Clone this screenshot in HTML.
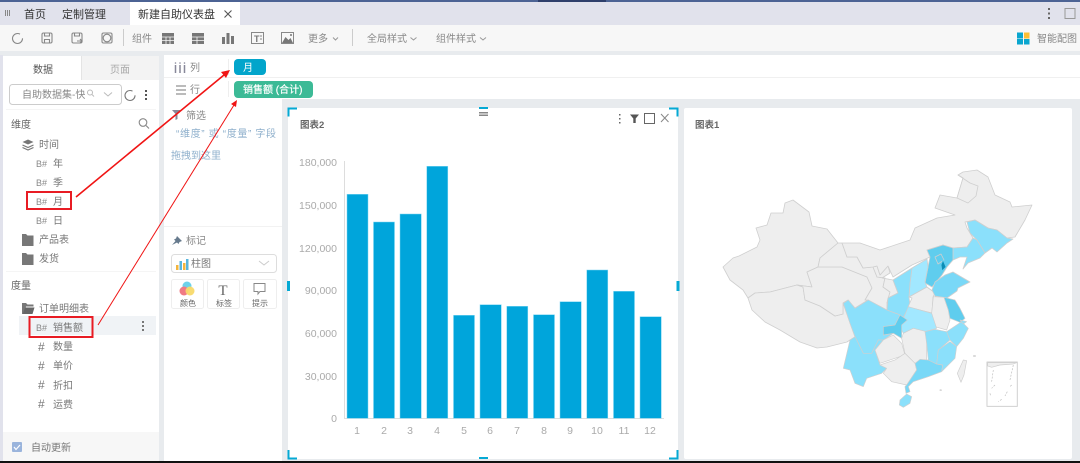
<!DOCTYPE html>
<html lang="zh">
<head>
<meta charset="utf-8">
<title>新建自助仪表盘</title>
<style>
html,body{margin:0;padding:0;width:1080px;height:463px;overflow:hidden;background:#e8ebee}
svg{display:block}
text{font-family:"Liberation Sans","Noto Sans CJK SC",sans-serif;font-size:10px;fill:#555}
.a{font-size:10.500px;fill:#aaa}
.x{text-anchor:middle}
.r{text-anchor:end}
.i{fill:none;stroke:#888;stroke-width:1.100}
.g path{fill:#eeeeee;stroke:#cfcfcf;stroke-width:.8;stroke-linejoin:round}
.z path{stroke-width:2}
.b1{fill:#8be0fb!important}
.b2{fill:#a2e8ff!important}
.b3{fill:#5fcdee!important}
.b4{fill:#79d8f7!important}
</style>
</head>
<body>
<svg width="1080" height="463" viewBox="0 0 1080 463" xmlns="http://www.w3.org/2000/svg">
<rect width="1080" height="463" fill="#e8ebee"/>
<!-- top bars -->
<rect width="1080" height="2" fill="#4c6394"/>
<rect x="538" width="68" height="2" fill="#2e3f6b"/>
<rect y="2" width="1080" height="23" fill="#e1e2ec"/>
<rect x="130" y="2" width="110" height="23" fill="#fff"/>
<g stroke="#888" stroke-width="1"><path d="M5.500 10v6M7.500 10v6M9.500 10v6"/></g>
<text x="24" y="18" style="font-size:11px;fill:#333">首页</text>
<text x="62" y="18" style="font-size:11px;fill:#333">定制管理</text>
<text x="138" y="18" style="font-size:11px;fill:#333">新建自助仪表盘</text>
<path d="M224.500 10.500l7 7M231.500 10.500l-7 7" stroke="#555" stroke-width="1.100" fill="none"/>
<g fill="#666"><rect x="1048" y="8" width="2" height="2"/><rect x="1048" y="12.500" width="2" height="2"/><rect x="1048" y="17" width="2" height="2"/></g>
<rect x="1065" y="8.500" width="10" height="10" fill="none" stroke="#999" stroke-width="1"/>
<!-- toolbar -->
<rect y="25" width="1080" height="26" fill="#f7f7f7"/>
<g class="i">
<circle cx="17.500" cy="38.500" r="5" stroke-dasharray="26 5"/>
<rect x="42" y="33" width="10" height="10" rx="1.500"/><path d="M44.500 33v3h5v-3M44.500 43v-3.500h5V43"/>
<rect x="72" y="33" width="10" height="10" rx="1.500"/><path d="M74.500 33v3h5v-3M77 41h5M80 39l2 2-2 2"/>
<rect x="102" y="33" width="10" height="10" rx="1.500"/><circle cx="107" cy="38" r="3.800"/>
</g>
<rect x="123" y="29" width="1" height="17" fill="#ccc"/>
<text x="132" y="42" style="fill:#888">组件</text>
<g fill="#777">
<rect x="162" y="33" width="12" height="11"/><rect x="192" y="33" width="12" height="11"/>
<rect x="222" y="37" width="3" height="7"/><rect x="226.500" y="33" width="3" height="11"/><rect x="231" y="36" width="3" height="8"/>
</g>
<g stroke="#f7f7f7" stroke-width=".8">
<path d="M162 37h12M162 40.500h12M166 37v7M170 37v7M192 37h12M192 40.500h12M197 37v7"/>
</g>
<g fill="none" stroke="#888"><rect x="251.500" y="32.500" width="12" height="11"/><rect x="281.500" y="32.500" width="12" height="11"/></g>
<text x="254" y="42" style="font-size:9px;font-weight:bold;fill:#777">T</text><path d="M260 36h2M260 39h2" stroke="#888"/>
<path d="M282 43l3.500-6 3 3 2-2 2.500 5z" fill="#777"/><circle cx="291" cy="35" r="1" fill="#777"/>
<text x="308" y="42" style="fill:#888">更多</text>
<path d="M333 37.500l2.500 2.500 2.500-2.500M410.500 37.500l3 2.500 3-2.500M480 37.500l3 2.500 3-2.500" fill="none" stroke="#999"/>
<rect x="352" y="29" width="1" height="17" fill="#ccc"/>
<text x="367" y="42" style="fill:#888">全局样式</text>
<text x="436" y="42" style="fill:#888">组件样式</text>
<rect x="1017" y="32.500" width="6" height="6" fill="#0aa6cf"/><rect x="1024" y="32.500" width="5.500" height="6" fill="#fbbf35"/>
<rect x="1017" y="39" width="6" height="5.500" fill="#0aa6cf"/><rect x="1024" y="39" width="5.500" height="5.500" fill="#0aa6cf"/>
<text x="1037" y="42" style="fill:#888">智能配图</text>
<!-- left panel -->
<rect x="0" y="55" width="3" height="406" fill="#e1e2ec"/>
<rect x="3" y="56" width="156" height="405" fill="#fff"/>
<rect x="82" y="56" width="77" height="24" fill="#f3f3f3"/>
<rect x="81" y="56" width="1" height="24" fill="#e4e4e4"/>
<text x="33" y="73" style="fill:#555">数据</text>
<text x="110" y="73" style="fill:#aaa">页面</text>
<rect x="9.500" y="84.500" width="112" height="20" rx="3" fill="#fff" stroke="#ccc"/>
<text x="22" y="98" style="fill:#888">自助数据集-快</text>
<g fill="none" stroke="#bbb"><circle cx="90" cy="92.500" r="2.500"/><path d="M92 94.500l2 2"/><path d="M104 92.500l4 3.500 4-3.500"/></g>
<circle cx="130" cy="95.500" r="5" fill="none" stroke="#777" stroke-width="1.100" stroke-dasharray="26 5"/>
<g fill="#555"><rect x="145" y="90" width="2" height="2"/><rect x="145" y="94" width="2" height="2"/><rect x="145" y="98" width="2" height="2"/></g>
<rect x="6" y="109" width="150" height="1" fill="#f5f5f5"/>
<text x="11" y="128" style="fill:#666">维度</text>
<circle cx="143" cy="122.500" r="3.800" fill="none" stroke="#888" stroke-width="1.100"/><path d="M146 125.500l3 3" stroke="#888" stroke-width="1.100"/>
<path d="M28 139.500l5.500 2.500-5.500 2.500-5.500-2.500z" fill="#777"/><path d="M22.500 145l5.500 2.500 5.500-2.500M22.500 147.500l5.500 2.500 5.500-2.500" stroke="#777" fill="none" stroke-width="1.200"/>
<text x="39" y="148" style="fill:#777">时间</text>
<g>
<text x="36" y="167" style="font-size:9px;fill:#888">B#</text><text x="53" y="167" style="fill:#777">年</text>
<text x="36" y="186" style="font-size:9px;fill:#888">B#</text><text x="53" y="186" style="fill:#777">季</text>
<text x="36" y="205" style="font-size:9px;fill:#888">B#</text><text x="53" y="205" style="fill:#777">月</text>
<text x="36" y="224" style="font-size:9px;fill:#888">B#</text><text x="53" y="224" style="fill:#777">日</text>
</g>
<path d="M22 234h4l1.500 1.500h6v10.500H22z" fill="#777"/><text x="39" y="243" style="fill:#777">产品表</text>
<path d="M22 253h4l1.500 1.500h6v10.500H22z" fill="#777"/><text x="39" y="262" style="fill:#777">发货</text>
<rect x="6" y="271" width="150" height="1" fill="#f5f5f5"/>
<text x="11" y="289" style="fill:#666">度量</text>
<path d="M22 303h4l1.500 1.500h6v2H26l-2 7.500H22z" fill="#777"/><path d="M25 307.500h9.500l-2 6.500H23z" fill="#666"/><text x="39" y="312" style="fill:#777">订单明细表</text>
<rect x="19" y="316" width="137" height="19" fill="#f0f3f6"/>
<text x="36" y="331" style="font-size:9px;fill:#888">B#</text><text x="53" y="331" style="fill:#777">销售额</text>
<g fill="#777"><rect x="142" y="321" width="2" height="2"/><rect x="142" y="325" width="2" height="2"/><rect x="142" y="329" width="2" height="2"/></g>
<g>
<text x="38" y="351" style="font-size:12px;fill:#777">#</text><text x="53" y="350" style="fill:#777">数量</text>
<text x="38" y="370" style="font-size:12px;fill:#777">#</text><text x="53" y="369" style="fill:#777">单价</text>
<text x="38" y="389" style="font-size:12px;fill:#777">#</text><text x="53" y="389" style="fill:#777">折扣</text>
<text x="38" y="408" style="font-size:12px;fill:#777">#</text><text x="53" y="408" style="fill:#777">运费</text>
</g>
<rect x="3" y="432" width="156" height="29" fill="#f7f7f7"/>
<rect x="12" y="442" width="10" height="10" rx="1" fill="#9ab4dc"/><path d="M14 447l2 2.500 4-4.500" fill="none" stroke="#fff" stroke-width="1.200"/>
<text x="31" y="451" style="fill:#777">自动更新</text>
<!-- middle rows -->
<rect x="164" y="55" width="916" height="22" fill="#fff"/>
<rect x="164" y="78" width="916" height="21" fill="#fff"/>
<rect x="164" y="77" width="916" height="1" fill="#f0f0f0"/>
<path d="M175.500 65v8M180 65v8M184.500 65v8" stroke="#889" stroke-width="1.500"/><circle cx="175.500" cy="63" r=".8" fill="#889"/><circle cx="180" cy="63" r=".8" fill="#889"/><circle cx="184.500" cy="63" r=".8" fill="#889"/>
<text x="190" y="71" style="fill:#888">列</text>
<rect x="228" y="59" width="1" height="16" fill="#eee"/><rect x="228" y="81" width="1" height="16" fill="#eee"/>
<rect x="234" y="59" width="32" height="16" rx="4" fill="#02a5cb"/>
<text x="243" y="71" style="fill:#fff">月</text>
<path d="M176 86h10M176 90h10M176 94h10" stroke="#777" stroke-width="1"/>
<text x="190" y="93" style="fill:#888">行</text>
<rect x="234" y="81" width="79" height="17" rx="4" fill="#3cba96"/>
<text x="243" y="93" style="fill:#fff;stroke:#fff;stroke-width:.2">销售额 (合计)</text>
<!-- filter panel -->
<rect x="164" y="99" width="118" height="362" fill="#fff"/>
<path d="M172 110h9l-3.500 4v5l-2 1v-6z" fill="#889"/>
<text x="186" y="119" style="fill:#888">筛选</text>
<text x="176" y="137" textLength="100" style="fill:#8fb0cc">“维度” 或 “度量” 字段</text>
<text x="171" y="159" style="fill:#8fb0cc">拖拽到这里</text>
<rect x="164" y="226" width="118" height="1" fill="#f2f2f2"/>
<path d="M172 245l3.500-4-1.500-1.500 2-1 1-2.500 5 5-2.500 1-1 2-1.500-1.500z" fill="#667a8d"/>
<text x="186" y="244" style="fill:#888">标记</text>
<rect x="171.500" y="254.500" width="105" height="18" rx="3" fill="#fff" stroke="#ddd"/>
<rect x="176" y="265" width="2.500" height="5" fill="#f3b53d"/><rect x="179.500" y="261" width="2.500" height="9" fill="#58b6de"/><rect x="183" y="263" width="2.500" height="7" fill="#f3b53d"/><rect x="186" y="259" width="2.500" height="11" fill="#58b6de"/>
<text x="191" y="267" style="fill:#777">柱图</text>
<path d="M259 261l5 4 5-4" fill="none" stroke="#ccc"/>
<g fill="#fff" stroke="#eee"><rect x="171.500" y="279.500" width="32" height="29" rx="2"/><rect x="207.500" y="279.500" width="32" height="29" rx="2"/><rect x="243.500" y="279.500" width="33" height="29" rx="2"/></g>
<circle cx="187" cy="286" r="4.500" fill="#6dd2ea"/><circle cx="184" cy="291" r="4.500" fill="#f07a84"/><circle cx="190" cy="291" r="4.500" fill="#f8d96a" opacity=".95"/>
<text x="180" y="306" style="font-size:8px;fill:#666">颜色</text>
<text x="223" y="295" class="x" style="font-size:15px;font-family:'Liberation Serif',serif;fill:#666">T</text>
<text x="216" y="306" style="font-size:8px;fill:#666">标签</text>
<path d="M254 283.500h11v8h-5l-2 2.500v-2.500h-4z" fill="none" stroke="#888"/>
<text x="252" y="306" style="font-size:8px;fill:#666">提示</text>
<!-- chart card -->
<rect x="288" y="108" width="390" height="351" fill="#fff"/>
<rect x="684" y="108" width="388" height="351" rx="2" fill="#fff"/>
<text x="300" y="128" style="font-weight:bold;fill:#666;font-size:9.500px">图表2</text>
<text x="695" y="128" style="font-weight:bold;fill:#666;font-size:9.500px">图表1</text>
<g fill="#666"><rect x="619" y="114" width="1.500" height="1.500"/><rect x="619" y="118" width="1.500" height="1.500"/><rect x="619" y="122" width="1.500" height="1.500"/></g>
<path d="M630 114.500h9l-3.300 4v4.500h-2.400v-4.500z" fill="#555"/>
<rect x="644.500" y="113.500" width="10" height="10" fill="none" stroke="#666"/>
<path d="M661 114l7.500 8M668.500 114l-7.500 8" stroke="#888" fill="none"/>
<!-- handles -->
<path d="M297 108.500h-8.500v8M669 108.500h8.500v8M288.500 450v8.500h8.500M677.500 450v8.500H669" fill="none" stroke="#05a9d4" stroke-width="2"/>
<rect x="479" y="107" width="9" height="2" fill="#05a9d4"/>
<rect x="479" y="112" width="9" height="1.500" fill="#888"/><rect x="479" y="114.500" width="9" height="1.500" fill="#888"/>
<rect x="479" y="457" width="9" height="2" fill="#05a9d4"/>
<rect x="287" y="281" width="3" height="10" fill="#05a9d4"/><rect x="676.500" y="281" width="3" height="10" fill="#05a9d4"/>
<!-- axes -->
<text class="a r" x="337" y="166">180,000</text>
<text class="a r" x="337" y="209">150,000</text>
<text class="a r" x="337" y="252">120,000</text>
<text class="a r" x="337" y="294">90,000</text>
<text class="a r" x="337" y="337">60,000</text>
<text class="a r" x="337" y="380">30,000</text>
<text class="a r" x="337" y="422">0</text>
<path d="M344.500 161v257.500H664" fill="none" stroke="#ddd"/>
<!-- bars -->
<g fill="#00a5db" stroke="#7fd6f2" stroke-width=".5">
<rect x="347" y="194.300" width="21" height="224"/>
<rect x="373.500" y="222" width="21" height="196.300"/>
<rect x="400" y="214" width="21.300" height="204.300"/>
<rect x="426.800" y="166.300" width="21" height="252"/>
<rect x="453.500" y="315.300" width="21" height="103"/>
<rect x="480" y="304.700" width="21.300" height="113.600"/>
<rect x="506.800" y="306.300" width="21" height="112"/>
<rect x="533.500" y="314.700" width="21" height="103.600"/>
<rect x="560" y="301.700" width="21.300" height="116.600"/>
<rect x="586.800" y="270" width="21" height="148.300"/>
<rect x="613.500" y="291.300" width="21" height="127"/>
<rect x="640" y="316.700" width="21.300" height="101.600"/>
</g>
<g>
<text class="a x" x="357" y="434">1</text><text class="a x" x="384" y="434">2</text><text class="a x" x="410" y="434">3</text><text class="a x" x="437" y="434">4</text>
<text class="a x" x="464" y="434">5</text><text class="a x" x="490" y="434">6</text><text class="a x" x="517" y="434">7</text><text class="a x" x="544" y="434">8</text>
<text class="a x" x="570" y="434">9</text><text class="a x" x="597" y="434">10</text><text class="a x" x="624" y="434">11</text><text class="a x" x="650" y="434">12</text>
</g>
<!-- map: north, absolute coordinates -->
<g class="g">
<path d="M723 267L733 258L739 256L757 247L760 240L756 228L767 225L771 213L783 213L785 203L793 200L809 212L812 226L827 229L838 243L820 258L818 267L807 272L812 287L797 285L770 292L755 293L748 298L743 290L730 280Z"/>
<path d="M748 298L755 293L770 292L797 285L803 287L805 300L820 306L835 316L843 314L843 303L850 323L855 337L850 340L847 342L827 347L817 348L800 342L780 330L765 322L752 310Z"/>
<path d="M807 272L818 267L842 267L867 277L872 288L865 300L868 300L855 308L848 300L843 303L843 314L835 316L820 306L805 300L803 287L797 285L812 287Z"/>
<path d="M820 258L838 243L842 243L847 257L857 257L863 268L873 267L877 277L885 278L883 287L890 292L887 303L887 310L868 300L865 300L872 288L867 277L842 267L818 267Z"/>
<path d="M873 267L877 266L880 275L888 266L890 273L882 278L893 280L898 293L888 298L887 303L890 292L883 287L885 278L877 277Z"/>
<path d="M842 243L860 243L880 250L910 240L915 228L937 218L955 215L935 208L940 195L957 198L963 178L958 175L963 172L977 170L988 177L995 195L1010 202L1012 207L1032 205L1025 220L1015 237L1007 238L997 230L988 228L975 220L965 222L967 228L973 238L967 247L953 248L943 245L927 250L930 257L912 265L893 277L888 266L880 275L877 266L873 267L863 268L857 257L847 257Z"/>
<path d="M958 175L970 183L978 186L976 196L968 203L957 198L963 178Z"/>
<path class="b1" d="M967 222L975 220L988 228L997 230L1007 238L1013 239L1007 243L997 252L992 248L985 253L977 240L970 233Z"/>
<path class="b1" d="M973 238L977 240L985 253L980 258L968 263L963 269L967 257L960 257L953 260L953 248L967 247Z"/>
<path class="b3" d="M927 250L943 245L953 248L953 260L947 267L942 275L932 287L925 283L928 267L930 257Z"/>
<path class="b3" d="M935 257L941 254L944 260L938 264Z"/>
<path d="M943 260L946 267L942 271L941 265Z" style="fill:#0c8db5;stroke:#5fcdee"/>
<path class="b2" d="M912 268L927 259L928 267L925 282L927 287L909 297L910 283Z"/>
<path class="b1" d="M893 280L912 268L910 283L909 297L910 305L903 318L900 315L887 310L888 298L898 293Z"/>
<path d="M909 297L927 287L935 293L933 297L932 313L908 307L912 298Z"/>
<path class="b4" d="M945 275L953 272L970 282L958 288L957 291L947 298L935 296L932 290L935 282Z"/>
</g>
<!-- map: south (zoom coordinates) -->
<g class="g z" transform="translate(800 290) scale(.3333)">
<path d="M400 20L432 22L445 60L450 90L440 120L405 110L395 70Z"/>
<path class="b3" d="M432 22L465 30L480 55L495 85L480 97L450 85L445 60Z"/>
<path class="b2" d="M325 50L395 70L410 115L375 125L340 115L310 130L295 100L310 85Z"/>
<path class="b1" d="M130 40L145 30L165 55L205 30L260 60L300 75L285 105L250 110L250 135L280 130L250 150L235 150L215 190L190 190L165 140L150 100Z"/>
<path class="b3" d="M300 75L322 90L305 105L305 145L280 130L250 135L250 110L285 105Z"/>
<path class="b1" d="M150 150L165 140L190 190L215 190L235 150L250 150L225 180L240 225L260 235L245 250L200 265L190 290L165 280L150 240L130 235Z"/>
<path d="M225 180L250 150L280 135L305 160L315 195L285 205L240 220Z"/>
<path d="M310 130L340 115L380 125L380 210L345 220L315 190L305 145Z"/>
<path d="M240 225L285 210L315 190L345 220L350 240L320 285L275 275L250 250L260 235Z"/>
<path class="b4" d="M345 220L360 208L385 210L410 222L428 225L425 245L385 260L340 275L325 290L330 305L318 310L315 290L320 285L350 240Z"/>
<path class="b1" d="M375 125L405 118L440 125L450 150L415 180L410 222L385 210L380 160Z"/>
<path class="b1" d="M450 155L470 170L465 205L425 245L428 225L410 222L415 180Z"/>
<path class="b1" d="M485 95L505 115L490 145L470 170L450 150L440 125Z"/>
<path class="b1" d="M480 90L500 95L490 102Z"/>
<path class="b1" d="M300 330L320 312L335 320L330 340L310 352L298 345Z"/>
<path d="M490 210L500 212L492 255L483 277L472 250Z"/>
<path d="M521 196h5v4h-5zM420 299h4v3h-4z"/>
<path d="M561 216H652V349H561Z" style="fill:none;stroke:#d0d0d0;stroke-width:3"/>
<path d="M563 218H650L640 222L600 225L575 232L563 228Z"/>
<path d="M580 240L575 275M640 225L630 270M585 285L575 295M635 285L630 290M570 310L572 318M622 305L615 318M605 328L595 335" style="fill:none;stroke:#bdbdbd;stroke-dasharray:6 4"/>
</g>
<!-- red annotations -->
<rect x="27" y="192" width="44" height="17" fill="none" stroke="#e81c24" stroke-width="2"/>
<rect x="29.500" y="317" width="63" height="20" fill="none" stroke="#e81c24" stroke-width="2"/>
<path d="M76 197L224 75" stroke="#f01414" stroke-width="1.600" fill="none"/>
<path d="M230 70L221 72L226 78Z" fill="#f01414"/>
<path d="M98 325L234 105" stroke="#f01414" stroke-width="1" fill="none"/>
<path d="M237 100L231 104L236 107Z" fill="#f01414"/>
<!-- bottom bar -->
<rect y="461" width="1080" height="2" fill="#111"/>
</svg>
</body>
</html>
